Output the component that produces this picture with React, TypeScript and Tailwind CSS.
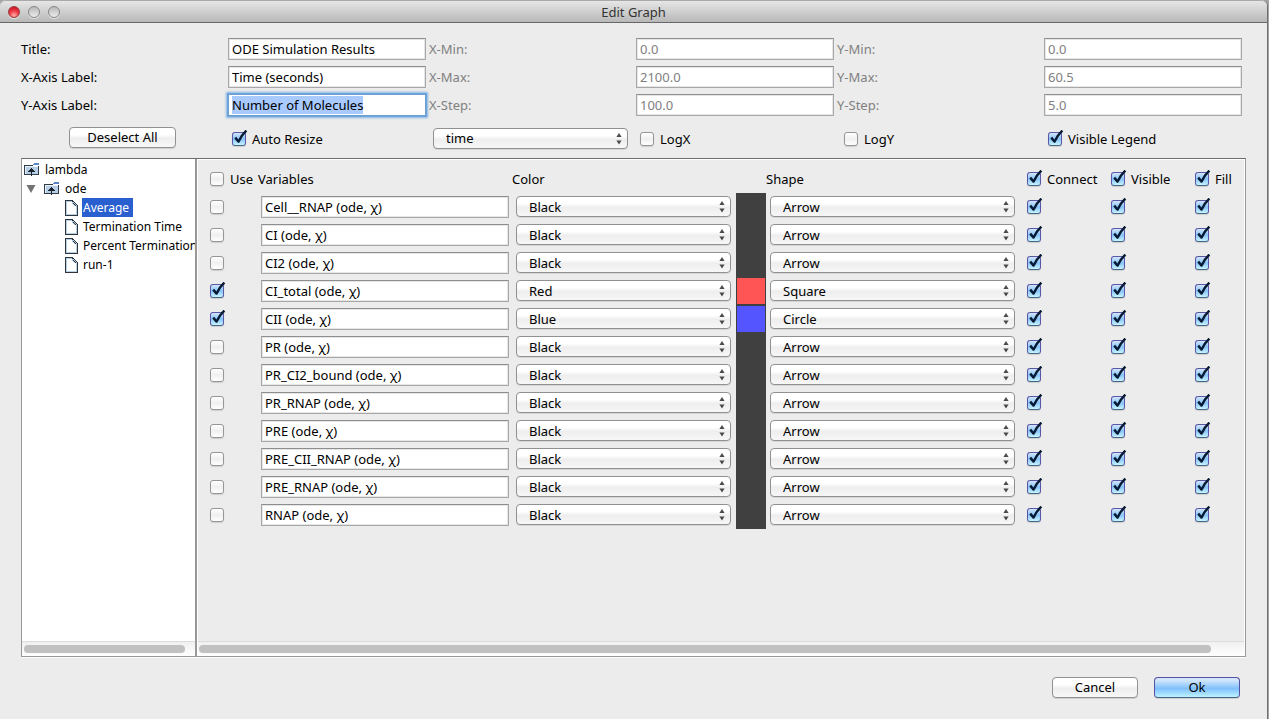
import { useEffect, useId, useRef, useState } from "react";
import type { ReactNode } from "react";

const fieldClass =
  "block h-[22px] w-full min-w-0 rounded-none border border-[#a8a8a8] border-t-[#8e8e8e] bg-white px-[3px] text-[13px] leading-4 text-black shadow-[inset_0_0_0_1px_#e6e6e6] outline-none disabled:text-[#808080]";

function Check({ label, checked = false, name }: { label?: string; checked?: boolean; name?: string }) {
  const [on, setOn] = useState(checked);
  return (
    <label className="flex items-center gap-1.5 whitespace-nowrap">
      <span className="relative block size-3.5 shrink-0">
        <input
          type="checkbox"
          aria-label={label ? undefined : name}
          checked={on}
          onChange={() => setOn(!on)}
          className="block size-3.5 appearance-none rounded-[3px] border border-[#969696] bg-linear-to-b from-white via-[#f0f0f0] to-white shadow-[0_1px_1px_#cfcfcf] checked:border-[#5b56a8] checked:border-b-[#46648c] checked:from-[#d3e7fb] checked:via-[#86c2f8] checked:to-[#c8f6ff]"
        />
        {on && (
          <svg className="pointer-events-none absolute -top-0.5 left-0 h-4 w-4" viewBox="0 0 16 16" fill="none">
            <path d="M3.2 7.6 L6.6 11.6 C8.4 7.4 11 3.6 14.4 0.6" stroke="#061a33" strokeWidth="2.4" strokeLinejoin="round" />
          </svg>
        )}
      </span>
      {label && <span>{label}</span>}
    </label>
  );
}

function Combo({ value, options, name }: { value: string; options: string[]; name: string }) {
  return (
    <div className="pr-[5px] pb-px pl-1">
      <div className="relative">
        <select
          aria-label={name}
          defaultValue={value}
          className="block h-[21px] w-full appearance-none rounded-[4px] border border-[#919191] bg-linear-to-b from-white from-35% via-[#eeeeee] via-55% to-[#f7f7f7] pr-5 pl-3 text-[13px] leading-4 text-black shadow-[0_1px_0_#d6d6d6] outline-none"
        >
          {options.map((o) => (
            <option key={o}>{o}</option>
          ))}
        </select>
        <svg className="pointer-events-none absolute top-[5px] right-1.5 h-3 w-1.5" viewBox="0 0 6 12" fill="#4a4a4a">
          <path d="M3 0 L5.6 4 H0.4 Z M0.4 7.4 H5.6 L3 11.4 Z" />
        </svg>
      </div>
    </div>
  );
}

function Field({ label, value, disabled, focused }: { label: string; value: string; disabled?: boolean; focused?: boolean }) {
  const id = useId();
  const ref = useRef<HTMLInputElement>(null);
  useEffect(() => {
    if (focused) {
      ref.current?.focus();
      ref.current?.select();
    }
  }, [focused]);
  return (
    <>
      <label htmlFor={id} className={disabled ? "text-[#808080]" : "text-black"}>
        {label}
      </label>
      <div className="px-[3px]">
        <input
          id={id}
          ref={ref}
          defaultValue={value}
          disabled={disabled}
          className={`${fieldClass} selection:bg-[#a8caff] selection:text-black focus:border-[#6d9fd0] focus:shadow-[0_0_0_1px_#6ea5da,0_0_2px_2px_#86b5e3]`}
        />
      </div>
    </>
  );
}

function PushButton({ children, primary, className }: { children: ReactNode; primary?: boolean; className: string }) {
  const look = primary
    ? "border-[#5451a5] border-b-[#47628a] from-[#d4e7fa] from-10% via-[#7fc0fb] via-55% to-[#bdf3ff]"
    : "border-[#919191] from-white from-35% via-[#eeeeee] via-55% to-[#f8f8f8]";
  return (
    <button
      type="button"
      className={`h-[21px] rounded-[4px] border bg-linear-to-b pb-0.5 text-center leading-4 shadow-[0_1px_0_#d0d0d0] ${look} ${className}`}
    >
      {children}
    </button>
  );
}

function FolderIcon() {
  return (
    <svg className="h-4 w-4 shrink-0" viewBox="0 0 16 16" shapeRendering="crispEdges">
      <path d="M9 2 H10 V1 H15 V3 H9 Z" fill="#5b84c4" />
      <path d="M0 3 H9 V4 H15 V13 H0 Z" fill="#333d48" />
      <path d="M1 4 H14 V12 H1 Z" fill="#b5cfe8" />
      <path d="M1 4 H14 V5 H1 Z M1 5 H2 V12 H1 Z" fill="#e8f1fa" />
      <path d="M7 6 H8 V7 H9 V8 H10 V9 H11 V10 H8 V14 H7 V10 H4 V9 H5 V8 H6 V7 H7 Z" fill="#1e2329" />
    </svg>
  );
}

function FileIcon() {
  return (
    <svg className="h-4 w-[13px] shrink-0" viewBox="0 0 13 16" shapeRendering="crispEdges">
      <path d="M0 0 H8 V1 H9 V2 H10 V3 H11 V4 H12 V5 H13 V16 H0 Z" fill="#2f353b" />
      <path d="M1 1 H8 V2 H9 V3 H10 V4 H11 V5 H12 V15 H1 Z" fill="#b4cfe8" />
      <path d="M2 2 H7 V4 H8 V5 H9 V6 H11 V14 H2 Z" fill="#fff" />
      <path d="M7 1 H8 V2 H7 Z M8 3 H9 V4 H8 Z M9 4 H10 V5 H9 Z M10 5 H11 V6 H10 Z" fill="#2f353b" />
    </svg>
  );
}

const runs = ["Average", "Termination Time", "Percent Termination", "run-1"];

function RunTree() {
  const [selected, setSelected] = useState("Average");
  return (
    <nav aria-label="Simulations" className="min-h-0 flex-1 overflow-hidden pt-px text-xs whitespace-nowrap">
      <div className="flex h-[19px] items-center gap-[5px] pl-0.5">
        <FolderIcon />
        <span>lambda</span>
      </div>
      <div className="flex h-[19px] items-center pl-1">
        <svg className="mr-2 h-2 w-2.5" viewBox="0 0 10 8" fill="#737373">
          <path d="M0.5 0 H9.5 L5 8 Z" />
        </svg>
        <FolderIcon />
        <span className="ml-[5px]">ode</span>
      </div>
      <ul>
        {runs.map((run) => (
          <li key={run} className="flex h-[19px] items-center gap-1 pl-[43px]">
            <FileIcon />
            <button
              type="button"
              onClick={() => setSelected(run)}
              className={`h-[19px] px-px text-left leading-[19px] ${run === selected ? "bg-[#2a5fd0] pr-1 text-white" : ""}`}
            >
              {run}
            </button>
          </li>
        ))}
      </ul>
    </nav>
  );
}

function ScrollTrack({ className }: { className: string }) {
  return (
    <div className={`flex h-[15px] shrink-0 items-center border-t border-[#dcdcdc] bg-linear-to-b from-[#f0f0f0] to-white ${className}`}>
      <div className="h-2 w-full rounded-full bg-[#c1c1c1]" />
    </div>
  );
}

const colors = ["Black", "Red", "Blue"];
const shapes = ["Arrow", "Square", "Circle"];
const swatches: Record<string, string> = { Black: "bg-[#404040]", Red: "bg-[#ff5555]", Blue: "bg-[#5555ff]" };

const variables = [
  { name: "Cell__RNAP" },
  { name: "CI" },
  { name: "CI2" },
  { name: "CI_total", use: true, color: "Red", shape: "Square" },
  { name: "CII", use: true, color: "Blue", shape: "Circle" },
  { name: "PR" },
  { name: "PR_CI2_bound" },
  { name: "PR_RNAP" },
  { name: "PRE" },
  { name: "PRE_CII_RNAP" },
  { name: "PRE_RNAP" },
  { name: "RNAP" },
];

function VariableTable() {
  return (
    <table className="w-full min-w-[1038px] table-fixed border-collapse text-left">
      <colgroup>
        <col className="w-[53px]" />
        <col />
        <col className="w-[224px]" />
        <col className="w-[30px]" />
        <col className="w-[254px]" />
        <col className="w-[84px]" />
        <col className="w-[84px]" />
        <col className="w-[56px]" />
      </colgroup>
      <thead>
        <tr className="h-7 [&>th]:p-0 [&>th]:font-normal">
          <th>
            <div className="pl-[5px]"><Check label="Use" /></div>
          </th>
          <th>Variables</th>
          <th>Color</th>
          <th />
          <th>Shape</th>
          <th>
            <div className="pl-[7px]"><Check label="Connect" checked /></div>
          </th>
          <th>
            <div className="pl-[7px]"><Check label="Visible" checked /></div>
          </th>
          <th>
            <div className="pl-[7px]"><Check label="Fill" checked /></div>
          </th>
        </tr>
      </thead>
      <tbody>
        {variables.map(({ name, use, color = "Black", shape = "Arrow" }) => (
          <tr key={name} className="h-7 [&>td]:p-0">
            <td>
              <div className="pl-[5px]"><Check name={`Use ${name}`} checked={use} /></div>
            </td>
            <td>
              <div className="px-[3px]">
                <input aria-label={`${name} label`} defaultValue={`${name} (ode, χ)`} className={fieldClass} />
              </div>
            </td>
            <td>
              <Combo name={`${name} color`} value={color} options={colors} />
            </td>
            <td>
              <div className="h-7 bg-[#404040] p-px">
                <div className={`h-[26px] ${swatches[color]}`} />
              </div>
            </td>
            <td>
              <Combo name={`${name} shape`} value={shape} options={shapes} />
            </td>
            <td>
              <div className="pl-[7px]"><Check name={`Connect ${name}`} checked /></div>
            </td>
            <td>
              <div className="pl-[7px]"><Check name={`Visible ${name}`} checked /></div>
            </td>
            <td>
              <div className="pl-[7px]"><Check name={`Fill ${name}`} checked /></div>
            </td>
          </tr>
        ))}
      </tbody>
    </table>
  );
}

export default function App() {
  return (
    <div className="bg-[#a4a4a4] pr-px">
      <div className="flex min-h-screen flex-col rounded-t-md border-r border-[#6e6e6e] bg-[#ececec] font-['Noto_Sans','Lucida_Grande',sans-serif] text-[13px] leading-4 text-black">
        <header className="flex h-[23px] items-center rounded-t-md border-t border-b border-t-[#a9a9a9] border-b-[#686868] bg-linear-to-b from-[#e6e6e6] to-[#b8b8b8] px-2">
          <div className="flex flex-1 gap-2">
            <button type="button" aria-label="Close" className="size-3 rounded-full border border-[#9a3a3e] bg-[radial-gradient(circle_at_50%_85%,#ffb0a8,#f0404a_45%,#d01c28_80%)] shadow-[0_1px_0_#e8e8e8]" />
            <button type="button" aria-label="Minimize" className="size-3 rounded-full border border-[#858585] bg-linear-to-b from-[#b8b8b8] to-[#ededed] shadow-[0_1px_0_#e8e8e8]" />
            <button type="button" aria-label="Zoom" className="size-3 rounded-full border border-[#858585] bg-linear-to-b from-[#b8b8b8] to-[#ededed] shadow-[0_1px_0_#e8e8e8]" />
          </div>
          <h1 className="text-[13px] text-[#333333]">Edit Graph</h1>
          <div className="flex-1" />
        </header>

        <main className="flex flex-1 flex-col px-[21px] pt-3 pb-[21px]">
          <form className="grid auto-rows-[28px] grid-cols-6 items-center pr-px">
            <Field label="Title:" value="ODE Simulation Results" />
            <Field label="X-Min:" value="0.0" disabled />
            <Field label="Y-Min:" value="0.0" disabled />
            <Field label="X-Axis Label:" value="Time (seconds)" />
            <Field label="X-Max:" value="2100.0" disabled />
            <Field label="Y-Max:" value="60.5" disabled />
            <Field label="Y-Axis Label:" value="Number of Molecules" focused />
            <Field label="X-Step:" value="100.0" disabled />
            <Field label="Y-Step:" value="5.0" disabled />
          </form>
          <div className="grid h-[39px] grid-cols-6 items-center pr-px">
            <div className="flex justify-center pr-px pb-0.5">
              <PushButton className="w-[107px]">Deselect All</PushButton>
            </div>
            <div className="pl-[7px]"><Check label="Auto Resize" checked /></div>
            <Combo name="X variable" value="time" options={["time"]} />
            <div className="pl-[7px]"><Check label="LogX" /></div>
            <div className="pl-[7px]"><Check label="LogY" /></div>
            <div className="pl-[7px]"><Check label="Visible Legend" checked /></div>
          </div>

          <div className="flex flex-1 border border-[#989898] border-t-[#6c6c6c] shadow-[0_1px_0_#ffffff]">
            <section className="flex w-[175px] shrink-0 flex-col border-r-2 border-[#989898] bg-white">
              <RunTree />
              <ScrollTrack className="pr-2.5 pl-0.5" />
            </section>
            <section className="flex min-w-0 flex-1 flex-col border border-b-0 border-white">
              <div className="flex-1 overflow-hidden pt-[5px] pl-[7px]">
                <VariableTable />
              </div>
              <ScrollTrack className="pr-[33px] pl-px" />
            </section>
          </div>

          <div className="flex justify-end gap-4 pt-5 pr-1.5">
            <PushButton className="w-[86px]">Cancel</PushButton>
            <PushButton className="w-[86px]" primary>Ok</PushButton>
          </div>
        </main>
      </div>
    </div>
  );
}
